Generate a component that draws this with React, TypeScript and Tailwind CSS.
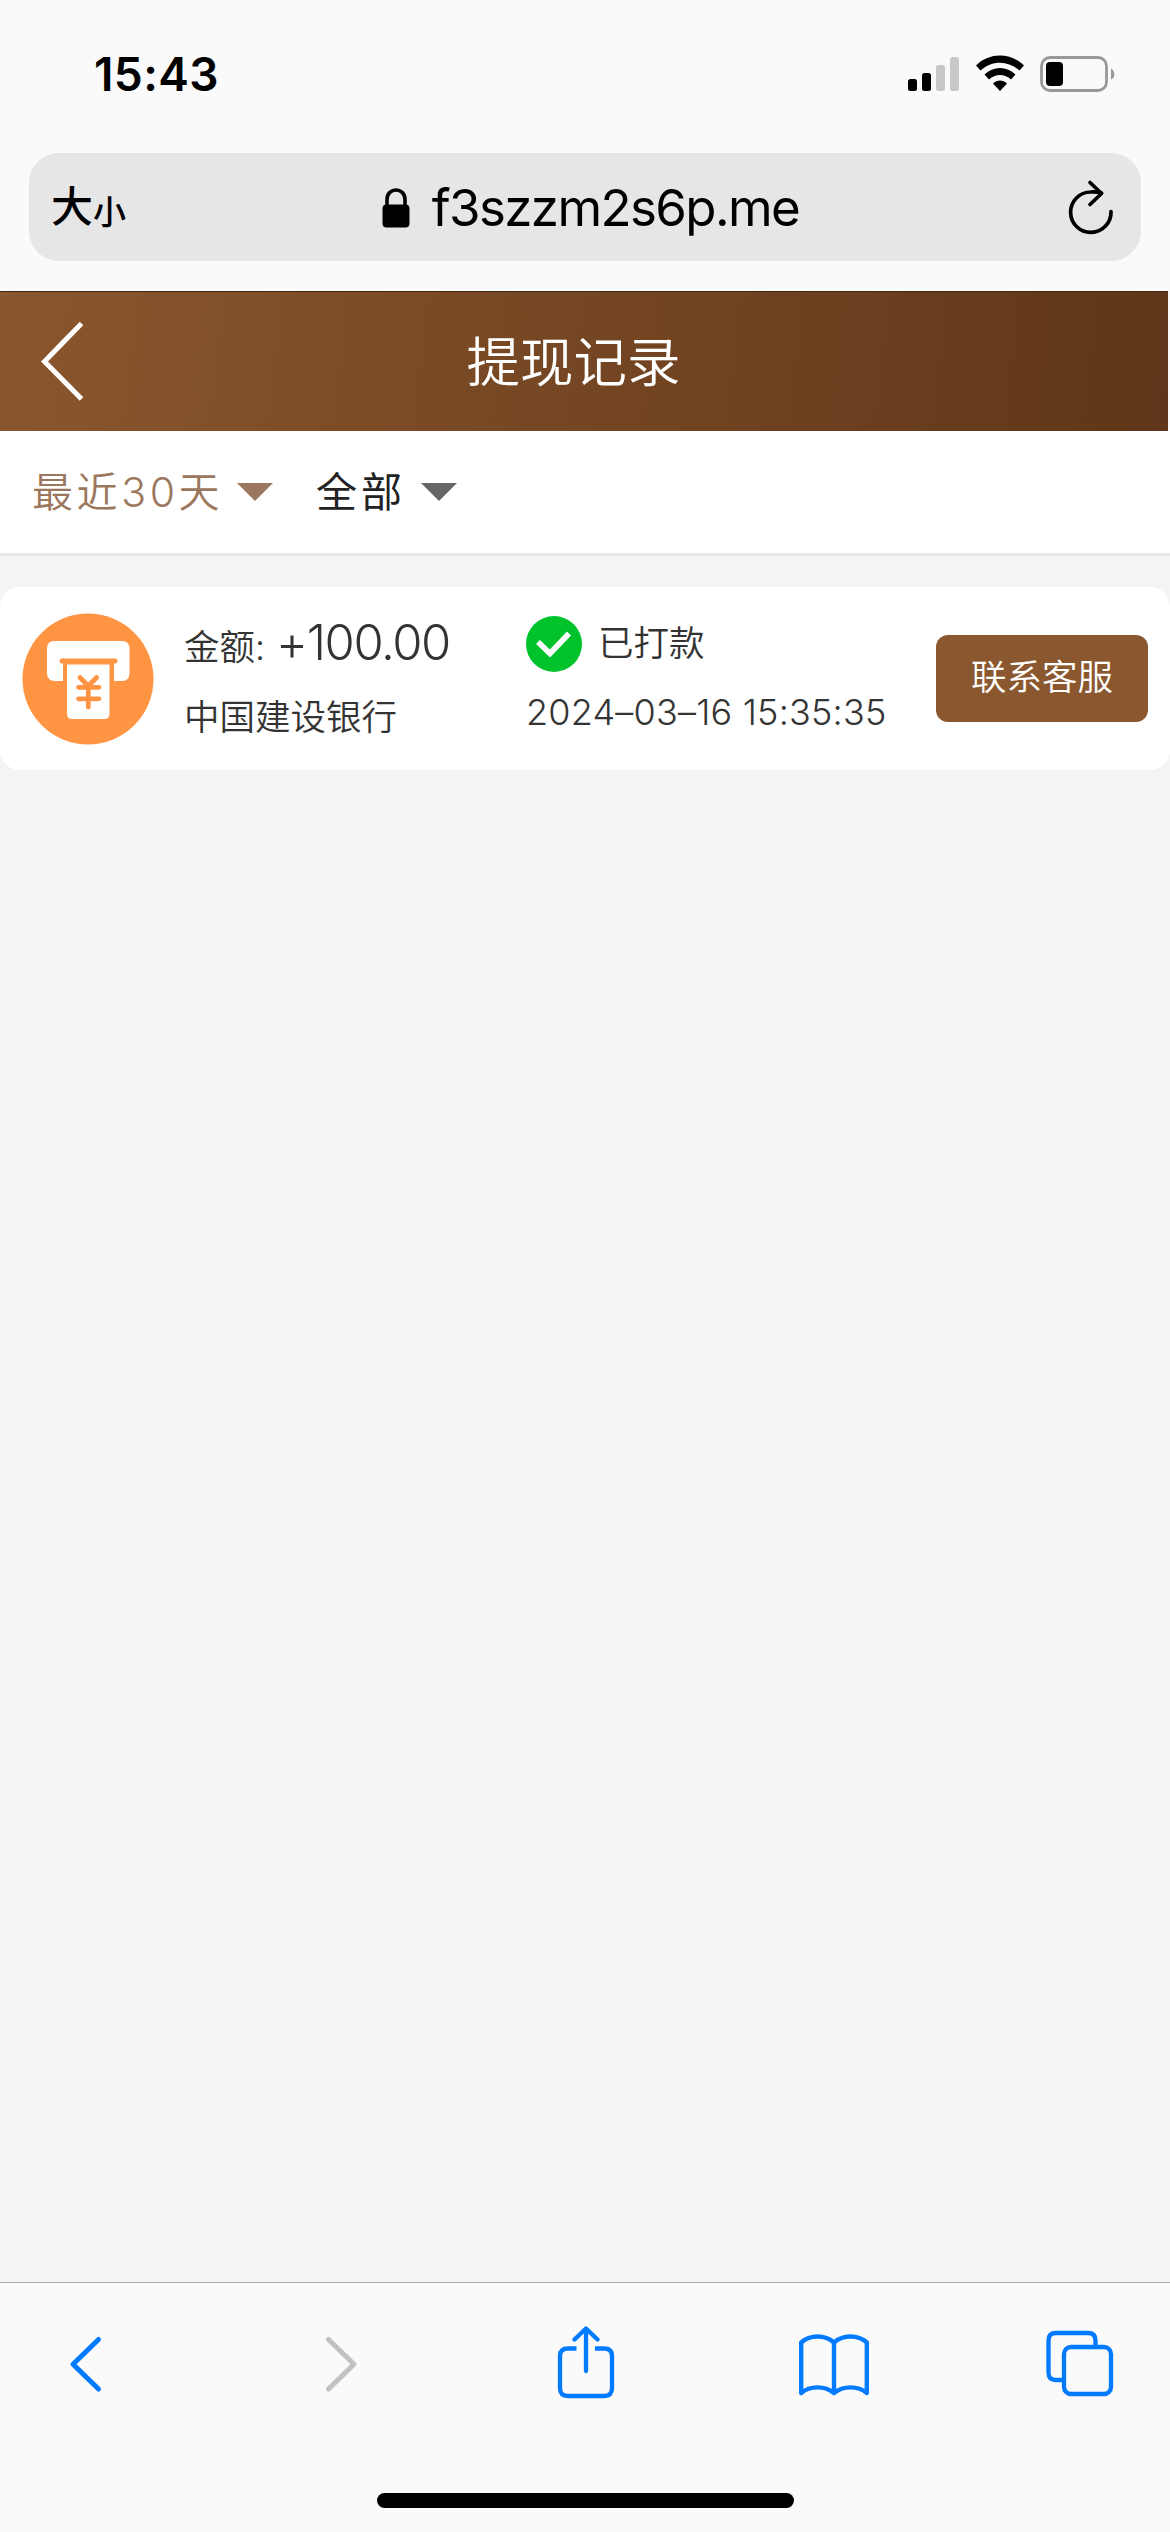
import React from 'react';

const records = [
  {
    id: 1,
    amount: '+100.00',
    bank: '中国建设银行',
    status: '已打款',
    time: '2024–03–16 15:35:35',
  },
];

const StatusBar = () => (
  <div className="h-[153px] pl-[94px] pr-[54px] pt-[46px] flex items-start justify-between">
    <span className="text-[46px] leading-[56px] font-semibold tracking-[0.4px]">15:43</span>
    <div className="flex items-start pt-[7px]">
      <svg width="52" height="40" viewBox="0 0 52 40" className="mr-[16px]">
        <rect x="0" y="26" width="9" height="12" rx="2.5" fill="#000" />
        <rect x="14" y="20" width="9" height="18" rx="2.5" fill="#000" />
        <rect x="28" y="12" width="9" height="26" rx="2.5" fill="#c8c8c8" />
        <rect x="42" y="4" width="9" height="34" rx="2.5" fill="#c8c8c8" />
      </svg>
      <svg width="48" height="40" viewBox="0 0 48 40" className="mr-[16px]">
        <path d="M0 12.5C13 -0.8 35 -0.8 48 12.5L43.5 17.5C32.5 7 15.5 7 4.5 17.5Z" fill="#000" />
        <path d="M8.5 21.5C17 12.8 31 12.8 39.5 21.5L35 26.5C29 20.5 19 20.5 13 26.5Z" fill="#000" />
        <path d="M17 30.5C21 26.6 27 26.6 31 30.5L24 38Z" fill="#000" />
      </svg>
      <svg width="76" height="40" viewBox="0 0 76 40">
        <rect x="1.5" y="4.5" width="65" height="33" rx="8.5" fill="none" stroke="#999" strokeWidth="2.8" />
        <rect x="6" y="9" width="17" height="24" rx="4" fill="#000" />
        <path d="M71 15.5C74.8 17.5 76 24.5 71 26.5Z" fill="#999" />
      </svg>
    </div>
  </div>
);

const AddressBar = () => (
  <div className="h-[138px] px-[29px]">
    <div className="h-[108px] rounded-[30px] bg-[#e6e6e6] flex items-center justify-between pl-[22px] pr-[27px]">
      <div className="w-[120px] h-[60px] flex">
        <span className="text-[42px] leading-[60px] font-medium">大</span>
        <span className="text-[33px] leading-[70px] font-medium">小</span>
      </div>
      <div className="flex items-center pt-[1px] pl-[16px]">
        <svg width="28" height="40" viewBox="0 0 28 40" className="mr-[22px]">
          <path d="M5 18V11.5C5 -1.2 23 -1.2 23 11.5V18" fill="none" stroke="#000" strokeWidth="3.6" />
          <rect x="0.5" y="16.5" width="27" height="23" rx="4" fill="#000" />
        </svg>
        <span className="text-[51px] leading-[60px] tracking-[-1.6px]">f3szzm2s6p.me</span>
      </div>
      <div className="w-[120px] flex justify-end">
        <svg width="46" height="56" viewBox="0 0 46 56" fill="none" stroke="#000" strokeWidth="3.7" strokeLinecap="round" strokeLinejoin="round">
          <path d="M43 32.5A20.2 20.2 0 1 1 22.8 13C26 12.7 29.5 13 33.5 14" />
          <path d="M22 3.5L33.5 14.5L22 25.5" />
        </svg>
      </div>
    </div>
  </div>
);

const PageHeader = () => (
  <header className="mr-[2px] h-[140px] border-t border-[#3f2c1b] bg-linear-[97deg] from-[#8a562d] to-[#5f3619] flex items-center justify-between pl-[40px] pr-[40px]">
    <svg width="46" height="80" viewBox="0 0 46 80" fill="none" stroke="#fff" strokeWidth="5">
      <path d="M41.5 1.5L4.5 39.5L41.5 77" />
    </svg>
    <h1 className="text-[53.5px] leading-[64px] font-[350] text-white pr-[43px] pt-[2px]">提现记录</h1>
    <div className="w-[24px]" />
  </header>
);

const Caret = ({ color }: { color: string }) => (
  <svg width="36" height="18" viewBox="0 0 36 18">
    <path d="M0 0H36L18 18Z" fill={color} />
  </svg>
);

const Filters = () => (
  <div className="h-[125px] bg-white border-b-[3px] border-[#e9e9e9] flex items-center pl-[32px]">
    <button className="flex items-center text-left text-[#9b775e]">
      <span className="text-[41px] leading-[60px] font-[350] tracking-[3.6px] w-[205px] whitespace-nowrap">最近30天</span>
      <Caret color="#9b775e" />
    </button>
    <button className="flex items-center text-left ml-[43px] text-[#222]">
      <span className="text-[41px] leading-[60px] tracking-[4px] w-[105px] whitespace-nowrap">全部</span>
      <Caret color="#666" />
    </button>
  </div>
);

const CashIcon = () => (
  <svg width="132" height="132" viewBox="0 0 132 132" className="shrink-0">
    <circle cx="66" cy="66" r="65.5" fill="#ff9442" />
    <path d="M32 28H100Q107.5 28 107.5 36V60Q107.5 68 100 68H32Q25 67 25 60V36Q25 28 32 28Z" fill="#fff" />
    <rect x="41" y="47" width="51" height="24" fill="#ff9442" />
    <rect x="37.5" y="45.5" width="58" height="5" rx="2.5" fill="#ff9442" />
    <path d="M45 51.5H87.5V101Q87.5 106 82.5 106H50Q45 106 45 101Z" fill="#fff" />
    <path d="M58 64.5L66.3 73L74.6 64.5M56.5 74.3H77M56.5 85.8H77M66.3 74V94" fill="none" stroke="#ff9442" strokeWidth="4.8" strokeLinecap="round" />
  </svg>
);

const CheckIcon = () => (
  <svg width="56" height="56" viewBox="0 0 56 56" className="shrink-0">
    <circle cx="28" cy="28" r="28" fill="#00c22b" />
    <path d="M12 26L24 37.5L43 17.5" fill="none" stroke="#fff" strokeWidth="5.6" />
  </svg>
);

export default function App() {
  return (
    <div className="w-[1170px] h-[2532px] bg-[#fafafa] text-black flex flex-col overflow-hidden font-['Inter','Noto_Sans_CJK_SC',sans-serif]">
      <StatusBar />
      <AddressBar />
      <PageHeader />
      <Filters />

      <main className="flex-1 bg-[#f2f4f5] pt-[31px]">
        {records.map((r) => (
          <div key={r.id} className="h-[183px] bg-white rounded-[20px] flex items-center pl-[22px] pr-[22px] text-[#333] font-[350]">
            <CashIcon />
            <div className="ml-[30px] w-[342px] pt-[6px]">
              <div className="flex items-baseline whitespace-nowrap h-[73px]">
                <span className="text-[35.5px] leading-[74px]">金额:</span>
                <span className="text-[49px] leading-[74px] ml-[11px] tracking-[-1.4px]">{r.amount}</span>
              </div>
              <div className="text-[35.5px] leading-[78px]">{r.bank}</div>
            </div>
            <div className="w-[410px]">
              <div className="flex items-center h-[66px]">
                <CheckIcon />
                <span className="ml-[16px] text-[35.5px] leading-[66px] pt-[1px]">{r.status}</span>
              </div>
              <div className="text-[36px] leading-[70px] tracking-[0.2px] whitespace-nowrap">{r.time}</div>
            </div>
            <button className="w-[212px] h-[87px] rounded-[12px] bg-[#8b572f] text-white text-[35.5px] leading-[85px] font-[350] pb-[2px]">
              联系客服
            </button>
          </div>
        ))}
      </main>

      <nav className="h-[250px] border-t border-[#a9a9a9] flex flex-col">
        <div className="h-[162px] flex items-center justify-between pl-[49px] pr-[54px]">
          <svg width="72" height="60" viewBox="0 0 72 60" fill="none" stroke="#007aff" strokeWidth="5" strokeLinecap="round" strokeLinejoin="round">
            <path d="M49.5 5.5L24 30.2L49.5 55" />
          </svg>
          <svg width="72" height="60" viewBox="0 0 72 60" fill="none" stroke="#c2c2c2" strokeWidth="5" strokeLinecap="round" strokeLinejoin="round">
            <path d="M30.5 5.5L56 30.2L30.5 55" />
          </svg>
          <svg width="72" height="76" viewBox="0 0 72 76" fill="none" stroke="#007aff" strokeWidth="4.3">
            <path d="M28.5 22.5H20Q12 22.5 12 30V62Q12 70 20 70H56Q64 70 64 62V30Q64 22.5 56 22.5H47" />
            <path d="M38 45V3.5M26.5 13.5L38 2.5L49.5 13.5" strokeLinecap="round" strokeLinejoin="round" />
          </svg>
          <svg width="72" height="64" viewBox="0 0 72 64" fill="none" stroke="#007aff" strokeWidth="4.4" strokeLinejoin="round" strokeLinecap="round">
            <path d="M37 10.5V61M4.2 61V10.5C13 2.5 28 2.5 37 10.5C46 2.5 61 2.5 69.8 10.5V61C61 53.5 46 53.5 37 61C28 53.5 13 53.5 4.2 61Z" />
          </svg>
          <svg width="70" height="70" viewBox="0 0 70 70" fill="none" stroke="#007aff" strokeWidth="4.3">
            <rect x="18" y="18" width="47" height="47" rx="7" />
            <path d="M18 51H10Q2.5 51 2.5 43.5V11.5Q2.5 4 10 4H42Q49.5 4 49.5 11.5V18" />
          </svg>
        </div>
        <div className="mx-auto mt-[48px] w-[417px] h-[15px] rounded-full bg-black" />
      </nav>
    </div>
  );
}
